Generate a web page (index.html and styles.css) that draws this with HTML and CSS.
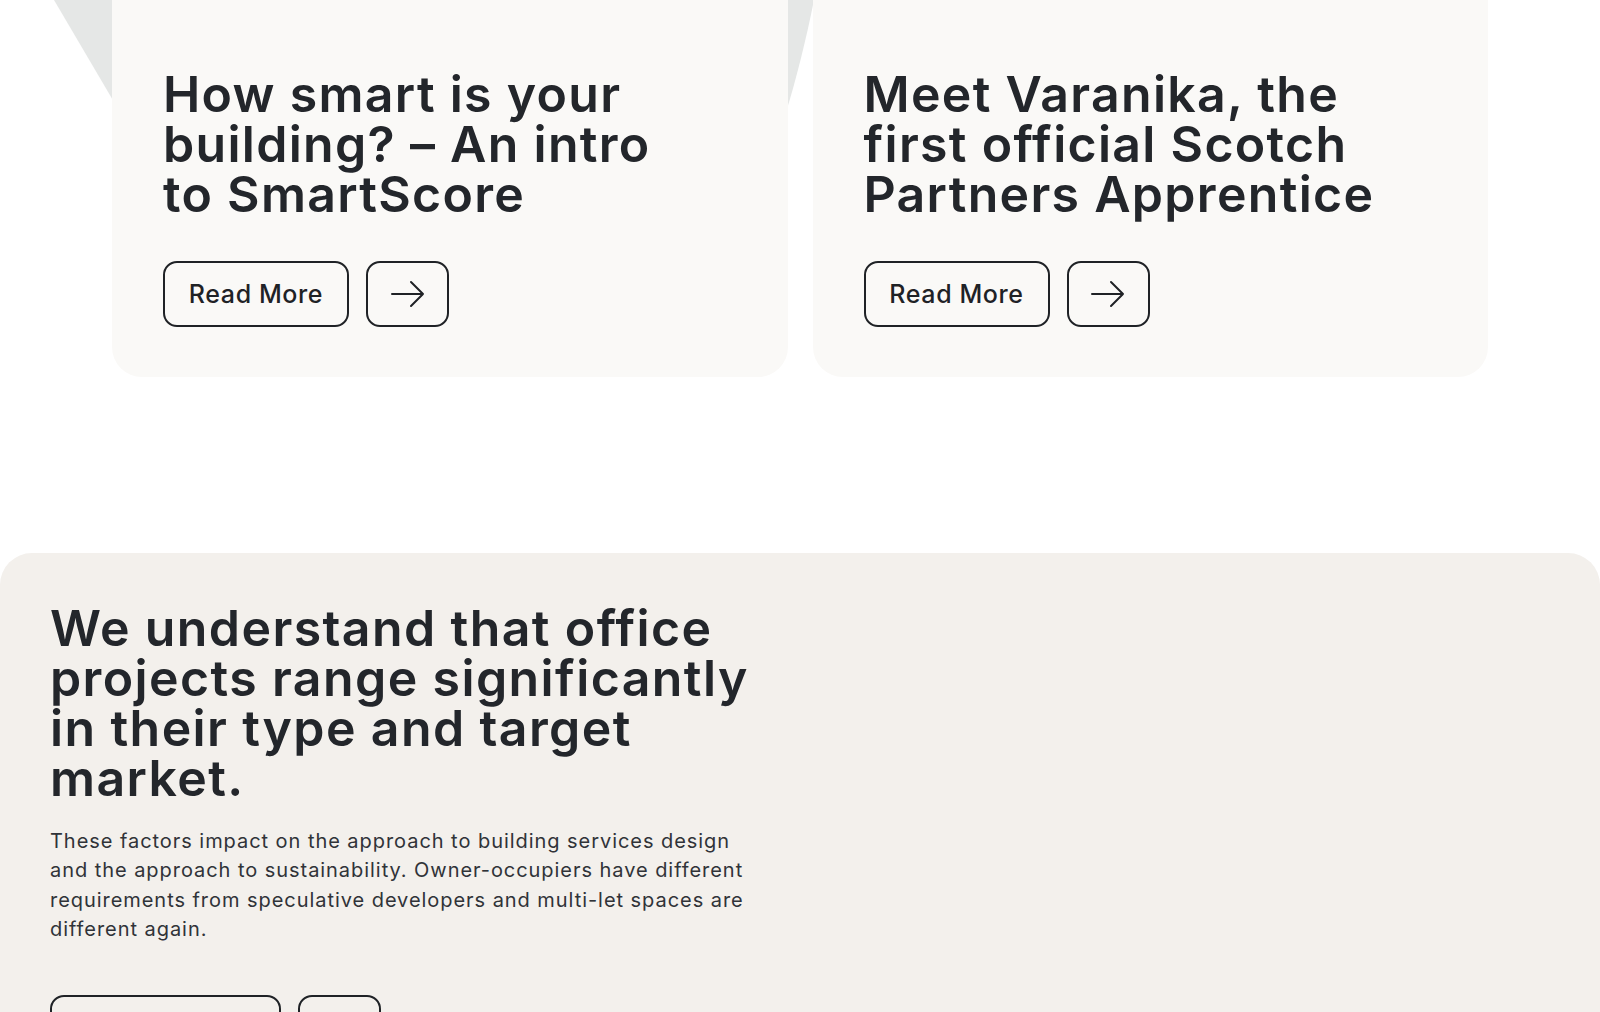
FILE: index.html
```html
<!DOCTYPE html>
<html lang="en">
<head>
<meta charset="utf-8">
<title>Insights</title>
<link rel="stylesheet" href="styles.css">
</head>
<body>
<section class="posts">
  <svg class="posts-bg" width="1600" height="200" viewBox="0 0 1600 200" aria-hidden="true">
    <polygon points="54,0 114,0 114,102" fill="#e5e7e6"/>
    <path d="M785 0 L814 0 C806 40 796 80 786 112 Z" fill="#e5e7e6"/>
  </svg>
  <article class="card">
    <h2 class="card-title">How smart is your<br>building? – An intro<br>to SmartScore</h2>
    <div class="actions">
      <a class="btn btn-text" href="#">Read More</a>
      <a class="btn btn-icon" href="#" aria-label="Read more">
        <svg width="34" height="30" viewBox="0 0 34 30"><path d="M1 15 H32 M20 3 L32 15 L20 27" fill="none" stroke="#1f2226" stroke-width="2" stroke-linecap="round" stroke-linejoin="round"/></svg>
      </a>
    </div>
  </article>
  <article class="card">
    <h2 class="card-title">Meet Varanika, the<br>first official Scotch<br>Partners Apprentice</h2>
    <div class="actions">
      <a class="btn btn-text" href="#">Read More</a>
      <a class="btn btn-icon" href="#" aria-label="Read more">
        <svg width="34" height="30" viewBox="0 0 34 30"><path d="M1 15 H32 M20 3 L32 15 L20 27" fill="none" stroke="#1f2226" stroke-width="2" stroke-linecap="round" stroke-linejoin="round"/></svg>
      </a>
    </div>
  </article>
</section>

<section class="intro">
  <div class="intro-col">
    <h2 class="intro-title">We understand that office<br>projects range significantly<br>in their type and target<br>market.</h2>
    <p class="intro-text">These factors impact on the approach to building services design<br>and the approach to sustainability. Owner-occupiers have different<br>requirements from speculative developers and multi-let spaces are<br>different again.</p>
    <div class="actions actions-intro">
      <a class="btn btn-wide" href="#">Find Out More</a>
      <a class="btn btn-icon" href="#" aria-label="Find out more">
        <svg width="34" height="30" viewBox="0 0 34 30"><path d="M1 15 H32 M20 3 L32 15 L20 27" fill="none" stroke="#1f2226" stroke-width="2" stroke-linecap="round" stroke-linejoin="round"/></svg>
      </a>
    </div>
  </div>
</section>
</body>
</html>
```

FILE: styles.css
```css
* { box-sizing: border-box; }

html, body {
  margin: 0;
  padding: 0;
  background: #ffffff;
}

body {
  font-family: Inter, "Noto Sans", "Liberation Sans", sans-serif;
  color: #23262b;
}

.posts {
  position: relative;
  display: flex;
  gap: 25px;
  padding: 0 112px;
  margin-top: -40px;
}

.posts-bg {
  position: absolute;
  top: 40px;
  left: 0;
  z-index: 0;
}

.card {
  position: relative;
  z-index: 1;
  flex: 1 1 0;
  background: #faf9f7;
  border-radius: 30px;
  padding: 109px 51px 50px;
}

.card-title {
  margin: 0;
  font-size: 50px;
  line-height: 50px;
  font-weight: 600;
  letter-spacing: 1.3px;
  white-space: nowrap;
}

.actions {
  display: flex;
  gap: 17px;
  margin-top: 42px;
}

.btn {
  display: inline-flex;
  align-items: center;
  justify-content: center;
  height: 66px;
  padding: 0;
  border: 2.6px solid #1f2226;
  border-radius: 14px;
  color: #1f2226;
  text-decoration: none;
  font-size: 25px;
  font-weight: 500;
  letter-spacing: 0.6px;
  white-space: nowrap;
}

.btn-text {
  width: 186px;
}

.btn-icon {
  width: 83px;
}

.btn-wide {
  width: 231px;
}

.intro {
  margin-top: 176px;
  background: #f3f0ec;
  border-radius: 32px 32px 0 0;
  padding: 50px 50px 80px;
}

.intro-col {
  max-width: 760px;
}

.intro-title {
  margin: 0;
  font-size: 50px;
  line-height: 50px;
  font-weight: 600;
  letter-spacing: 1.4px;
  white-space: nowrap;
}

.intro-text {
  margin: 24px 0 0;
  font-size: 20px;
  line-height: 29.3px;
  font-weight: 400;
  letter-spacing: 0.95px;
  color: #303338;
  white-space: nowrap;
}

.actions-intro {
  margin-top: 51px;
}
```
